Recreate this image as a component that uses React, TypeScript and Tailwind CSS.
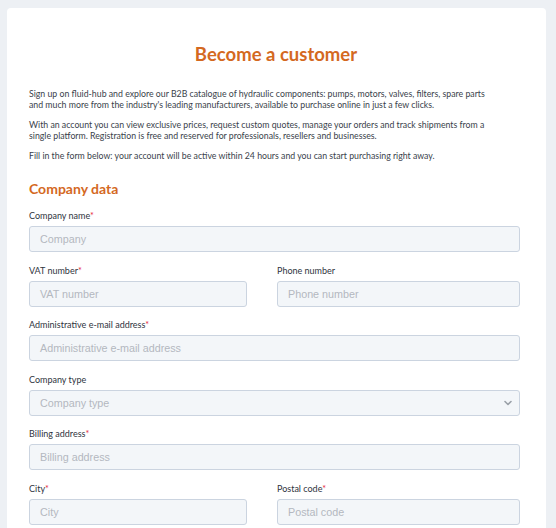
import React from "react";

const Req = () => <span className="text-[#e5283a]">*</span>;

function Label({ text, req }: { text: string; req?: boolean }) {
  return (
    <div className="text-[9px] leading-[11px] text-[#2f3440] mb-[5px]">
      {text}
      {req && <Req />}
    </div>
  );
}

function Input({ placeholder }: { placeholder: string }) {
  return (
    <div className="h-[26px] rounded-[3px] border border-[#cbd4e0] bg-[#f3f6f9] flex items-center px-[10px] text-[10.75px] text-[#b3b8c0] font-['Liberation_Sans',Arial,sans-serif]">
      {placeholder}
    </div>
  );
}

function Field({ label, req, placeholder }: { label: string; req?: boolean; placeholder: string }) {
  return (
    <div className="min-w-0">
      <Label text={label} req={req} />
      <Input placeholder={placeholder} />
    </div>
  );
}

export default function App() {
  return (
    <div className="min-h-[528px] bg-[#edf0f4] pl-[7px] pr-[10px] pt-[8px] font-['Lato',sans-serif]">
      <div className="bg-white rounded-t-[4px] pl-[22px] pr-[26px] pt-[35px] pb-[20px] h-[520px] overflow-hidden">
        <h1 className="text-center text-[18.5px] leading-[22px] font-bold text-[#d4691f] pl-[3px]">
          Become a customer
        </h1>
        <div className="mt-[23px] text-[8.75px] leading-[11px] text-[#3a3f4b]">
          <p>
            Sign up on fluid-hub and explore our B2B catalogue of hydraulic components: pumps, motors, valves, filters, spare parts
            <br />
            and much more from the industry's leading manufacturers, available to purchase online in just a few clicks.
          </p>
          <p className="mt-[9px]">
            With an account you can view exclusive prices, request custom quotes, manage your orders and track shipments from a
            <br />
            single platform. Registration is free and reserved for professionals, resellers and businesses.
          </p>
          <p className="mt-[9px]">
            Fill in the form below: your account will be active within 24 hours and you can start purchasing right away.
          </p>
        </div>
        <h2 className="mt-[18px] text-[14px] leading-[20px] font-bold text-[#d4691f]">Company data</h2>
        <div className="mt-[11px] flex flex-col gap-[12.6px]">
          <Field label="Company name" req placeholder="Company" />
          <div className="grid grid-cols-[218px_1fr] gap-[30px]">
            <Field label="VAT number" req placeholder="VAT number" />
            <Field label="Phone number" placeholder="Phone number" />
          </div>
          <Field label="Administrative e-mail address" req placeholder="Administrative e-mail address" />
          <div>
            <Label text="Company type" />
            <div className="h-[26px] rounded-[3px] border border-[#cbd4e0] bg-[#f3f6f9] flex items-center justify-between pl-[10px] pr-[6px] text-[10.75px] text-[#b3b8c0] font-['Liberation_Sans',Arial,sans-serif]">
              <span>Company type</span>
              <svg width="10" height="10" viewBox="0 0 10 10" fill="none">
                <path d="M2 3.5 L5 6.5 L8 3.5" stroke="#9aa0a8" strokeWidth="1.6" strokeLinecap="round" strokeLinejoin="round" />
              </svg>
            </div>
          </div>
          <Field label="Billing address" req placeholder="Billing address" />
          <div className="grid grid-cols-[218px_1fr] gap-[30px]">
            <Field label="City" req placeholder="City" />
            <Field label="Postal code" req placeholder="Postal code" />
          </div>
        </div>
      </div>
    </div>
  );
}
